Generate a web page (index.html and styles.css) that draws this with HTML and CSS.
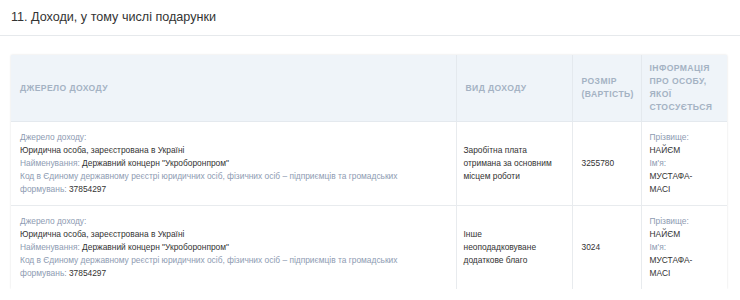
FILE: index.html
```html
<!DOCTYPE html>
<html lang="uk">
<head>
<meta charset="utf-8">
<link rel="stylesheet" href="styles.css">
</head>
<body>
<div class="section">
  <h2 class="section-title">11. Доходи, у тому числі подарунки</h2>
</div>
<div class="wrap">
  <table class="decl">
    <colgroup>
      <col class="c1"><col class="c2"><col class="c3"><col class="c4">
    </colgroup>
    <thead>
      <tr>
        <th>Джерело доходу</th>
        <th>Вид доходу</th>
        <th>Розмір (вартість)</th>
        <th class="last">Інформація про особу, якої стосується</th>
      </tr>
    </thead>
    <tbody>
      <tr>
        <td class="src">
          <div class="lbl">Джерело доходу:</div>
          <div class="val">Юридична особа, зареєстрована в Україні</div>
          <div><span class="lbl">Найменування:</span> <span class="val">Державний концерн "Укроборонпром"</span></div>
          <div><span class="lbl">Код в Єдиному державному реєстрі юридичних осіб, фізичних осіб – підприємців та громадських формувань:</span> <span class="val">37854297</span></div>
        </td>
        <td class="mid kind">Заробітна плата отримана за основним місцем роботи</td>
        <td class="mid">3255780</td>
        <td class="last">
          <div class="lbl">Прізвище:</div>
          <div class="val">НАЙЄМ</div>
          <div class="lbl">Ім'я:</div>
          <div class="val">МУСТАФА-МАСІ</div>
        </td>
      </tr>
      <tr>
        <td class="src">
          <div class="lbl">Джерело доходу:</div>
          <div class="val">Юридична особа, зареєстрована в Україні</div>
          <div><span class="lbl">Найменування:</span> <span class="val">Державний концерн "Укроборонпром"</span></div>
          <div><span class="lbl">Код в Єдиному державному реєстрі юридичних осіб, фізичних осіб – підприємців та громадських формувань:</span> <span class="val">37854297</span></div>
        </td>
        <td class="mid kind">Інше неоподадковуване додаткове благо</td>
        <td class="mid">3024</td>
        <td class="last">
          <div class="lbl">Прізвище:</div>
          <div class="val">НАЙЄМ</div>
          <div class="lbl">Ім'я:</div>
          <div class="val">МУСТАФА-МАСІ</div>
        </td>
      </tr>
    </tbody>
  </table>
</div>
</body>
</html>
```
FILE: styles.css
```css
html, body {
  margin: 0;
  padding: 0;
  background: #fff;
  font-family: "Liberation Sans", Arial, sans-serif;
  color: #333;
}
.section {
  border-bottom: 1px solid #e6e9ec;
  padding: 9px 11px 10px;
}
.section-title {
  margin: 0;
  font-size: 12.6px;
  font-weight: normal;
  line-height: 16px;
  color: #333;
}
.wrap {
  padding: 19px 13px 0 11px;
}
.decl {
  width: 716px;
  table-layout: fixed;
  border-collapse: collapse;
  font-size: 8.4px;
  line-height: 13px;
  box-shadow: 0 0 2px rgba(0, 0, 0, 0.12);
}
.c1 { width: 445px; }
.c2 { width: 116px; }
.c3 { width: 69px; }
.c4 { width: 86px; }
.decl th {
  background: #eff4f9;
  color: #a4b2c3;
  font-weight: bold;
  text-transform: uppercase;
  text-align: left;
  letter-spacing: 0.4px;
  font-size: 8.6px;
  line-height: 13px;
  padding: 7px 8px 7px 9px;
  border: 1px solid #e4e9ee;
  border-top: none;
  vertical-align: middle;
  height: 52px;
}
.decl th:first-child { border-left: none; }
.decl th:last-child { border-right: none; }
.decl td {
  padding: 9px 8px 9px 9px;
  border: 1px solid #e8ebee;
  vertical-align: top;
}
.decl td:first-child { border-left: none; }
.decl td:last-child { border-right: none; }
.decl tr:last-child td { border-bottom: none; }
.decl td.mid { vertical-align: middle; }
.decl td.src { padding-right: 32px; }
.decl td.kind { padding-left: 7px; padding-right: 18px; }
.decl .last { padding-left: 8px; padding-right: 15px; }
.lbl { color: #8e9bb2; }
.val { color: #333; }
```
